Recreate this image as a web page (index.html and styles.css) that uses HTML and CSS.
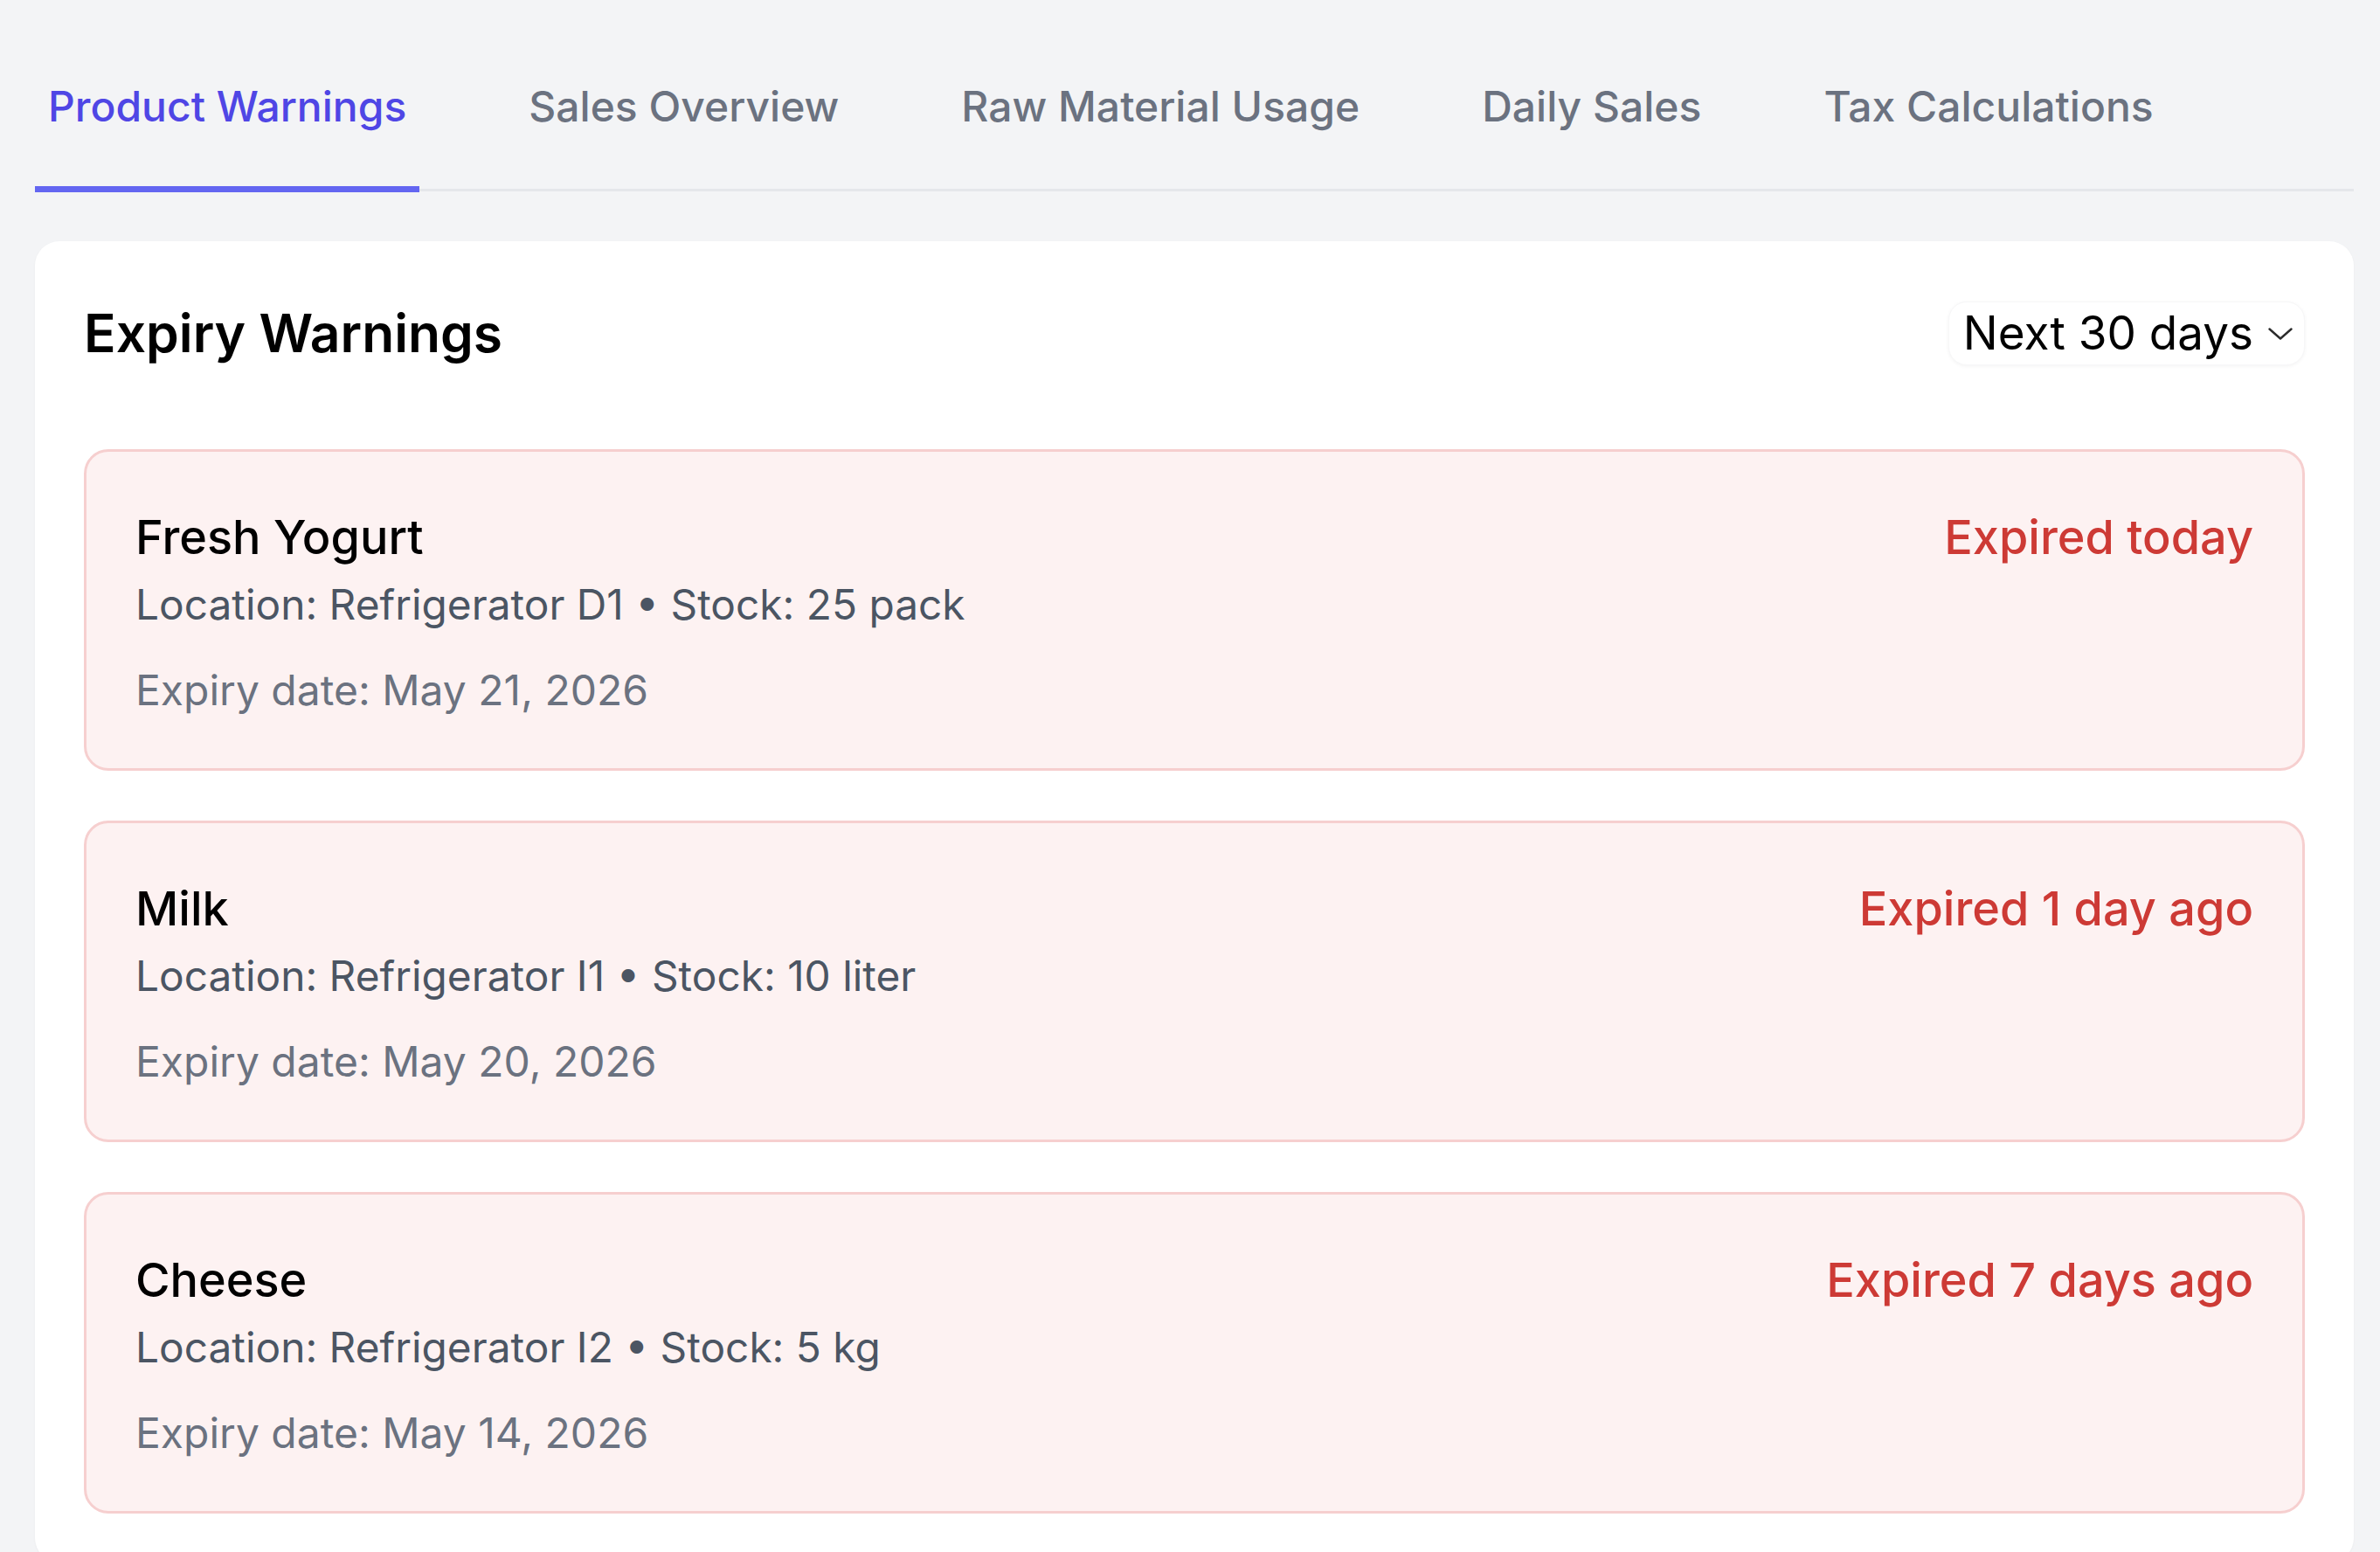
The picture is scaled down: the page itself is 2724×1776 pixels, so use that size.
FILE: index.html
```html
<!DOCTYPE html>
<html lang="en">
<head>
<meta charset="utf-8">
<title>Product Warnings</title>
<link rel="stylesheet" href="styles.css">
</head>
<body>
<div class="page">
  <nav class="tabs">
    <div class="tab active">Product Warnings</div>
    <div class="tab">Sales Overview</div>
    <div class="tab">Raw Material Usage</div>
    <div class="tab">Daily Sales</div>
    <div class="tab">Tax Calculations</div>
  </nav>

  <section class="panel">
    <div class="panel-head">
      <h2 class="panel-title">Expiry Warnings</h2>
      <div class="select">
        <span class="select-label">Next 30 days</span>
        <svg class="chevron" viewBox="0 0 28 14" width="28" height="14" aria-hidden="true">
          <path d="M1.5 1.5 L14 12.5 L26.5 1.5" fill="none" stroke="#2b2b2b" stroke-width="2.4" stroke-linecap="round" stroke-linejoin="round"/>
        </svg>
      </div>
    </div>

    <div class="list">
      <div class="item">
        <div class="item-info">
          <div class="item-name">Fresh Yogurt</div>
          <div class="item-meta">Location: Refrigerator D1 • Stock: 25 pack</div>
          <div class="item-date">Expiry date: May 21, 2026</div>
        </div>
        <div class="item-status">Expired today</div>
      </div>
      <div class="item">
        <div class="item-info">
          <div class="item-name">Milk</div>
          <div class="item-meta">Location: Refrigerator I1 • Stock: 10 liter</div>
          <div class="item-date">Expiry date: May 20, 2026</div>
        </div>
        <div class="item-status">Expired 1 day ago</div>
      </div>
      <div class="item">
        <div class="item-info">
          <div class="item-name">Cheese</div>
          <div class="item-meta">Location: Refrigerator I2 • Stock: 5 kg</div>
          <div class="item-date">Expiry date: May 14, 2026</div>
        </div>
        <div class="item-status">Expired 7 days ago</div>
      </div>
    </div>
  </section>
</div>
</body>
</html>
```

FILE: styles.css
```css
* {
  box-sizing: border-box;
}

html, body {
  margin: 0;
  padding: 0;
}

body {
  background: #f3f4f6;
  font-family: Inter, "Noto Sans", "Liberation Sans", sans-serif;
  color: #000;
  overflow: hidden;
}

.page {
  padding: 31px 30px 0 40px;
}

.tabs {
  display: flex;
  gap: 110px;
  border-bottom: 3.5px solid #e5e7eb;
}

.tab {
  padding: 56px 15px 55.5px;
  margin-bottom: -3.5px;
  border-bottom: 7px solid transparent;
  font-size: 48px;
  line-height: 70px;
  font-weight: 500;
  color: #6b7280;
  white-space: nowrap;
}

.tab.active {
  color: #4f46e5;
  border-bottom-color: #6366f1;
}

.panel {
  margin-top: 57px;
  background: #fff;
  border-radius: 28px;
  padding: 56px;
  box-shadow: 0 1px 3px rgba(0, 0, 0, 0.04);
}

.panel-head {
  display: flex;
  justify-content: space-between;
  align-items: center;
}

.panel-title {
  margin: 0;
  font-size: 60.5px;
  line-height: 98px;
  font-weight: 600;
  color: #000;
}

.select {
  display: flex;
  align-items: center;
  gap: 17px;
  height: 73px;
  padding: 0 13px 0 16px;
  background: #fff;
  border-radius: 21px;
  box-shadow: 0 1px 4px rgba(0, 0, 0, 0.05);
  border: 1px solid #f7f7f8;
}

.select-label {
  font-size: 53px;
  line-height: 70px;
  color: #000;
}

.chevron {
  display: block;
  margin-top: 2px;
}

.list {
  margin-top: 84px;
  display: flex;
  flex-direction: column;
  gap: 57px;
}

.item {
  display: flex;
  justify-content: space-between;
  align-items: flex-start;
  background: #fdf2f2;
  border: 3.5px solid #f6cfcf;
  border-radius: 28px;
  padding: 56px 56px 54px;
}

.item-name {
  font-size: 54px;
  line-height: 84px;
  font-weight: 500;
  color: #000;
}

.item-meta {
  font-size: 47.8px;
  line-height: 70px;
  color: #4b5563;
}

.item-date {
  margin-top: 28px;
  font-size: 48px;
  line-height: 70px;
  color: #6b7280;
}

.item-status {
  font-size: 54px;
  line-height: 84px;
  font-weight: 500;
  color: #cd3a35;
  white-space: nowrap;
}
```
